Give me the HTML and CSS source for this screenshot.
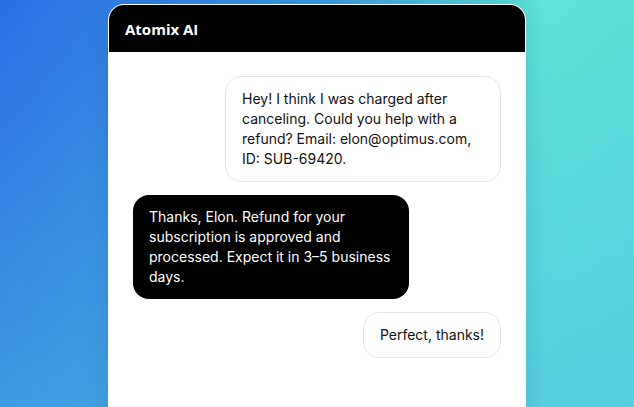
FILE: index.html
```html
<!DOCTYPE html>
<html>
<head>
<meta charset="utf-8">
<link rel="stylesheet" href="styles.css">
</head>
<body>
<div class="page">
  <div class="card">
    <div class="header">Atomix AI</div>
    <div class="messages">
      <div class="msg user">Hey! I think I was charged after canceling. Could you help with a refund? Email: elon@optimus.com, ID: SUB-69420.</div>
      <div class="msg bot">Thanks, Elon. Refund for your subscription is approved and processed. Expect it in 3–5 business days.</div>
      <div class="msg user">Perfect, thanks!</div>
    </div>
  </div>
</div>
</body>
</html>
```
FILE: styles.css
```css
html, body {
  margin: 0;
  height: 100%;
  overflow: hidden;
}
body {
  background:
    linear-gradient(to bottom, rgba(80, 190, 226, 0) 0%, rgba(80, 190, 226, 0.55) 100%),
    linear-gradient(to right, #2a6ee3 0%, #3a9ae2 50%, #5fe3da 85%, #5edfda 100%);
  font-family: Inter, "Liberation Sans", sans-serif;
}
.page {
  display: flex;
  justify-content: center;
  padding-top: 4px;
}
.card {
  width: 418px;
  box-sizing: border-box;
  background: #fff;
  border: 1px solid rgba(255, 255, 255, 0.9);
  border-radius: 16px 16px 0 0;
  overflow: hidden;
  min-height: 420px;
  box-shadow: 0 0 24px rgba(0, 40, 90, 0.12);
}
.header {
  background: #000;
  color: #fff;
  font-family: "Open Sans", "Noto Sans", sans-serif;
  font-weight: 700;
  font-size: 15px;
  height: 47px;
  display: flex;
  align-items: center;
  padding: 0 16px;
}
.messages {
  display: flex;
  flex-direction: column;
  gap: 13px;
  padding: 24px 24px;
}
.msg {
  max-width: 75%;
  box-sizing: border-box;
  font-size: 14px;
  line-height: 20px;
  padding: 12px 16px;
  border-radius: 16px;
}
.user {
  align-self: flex-end;
  background: #fff;
  color: #111;
  border: 1px solid #e4e4e4;
}
.bot {
  align-self: flex-start;
  background: #000;
  color: #fff;
}
```
